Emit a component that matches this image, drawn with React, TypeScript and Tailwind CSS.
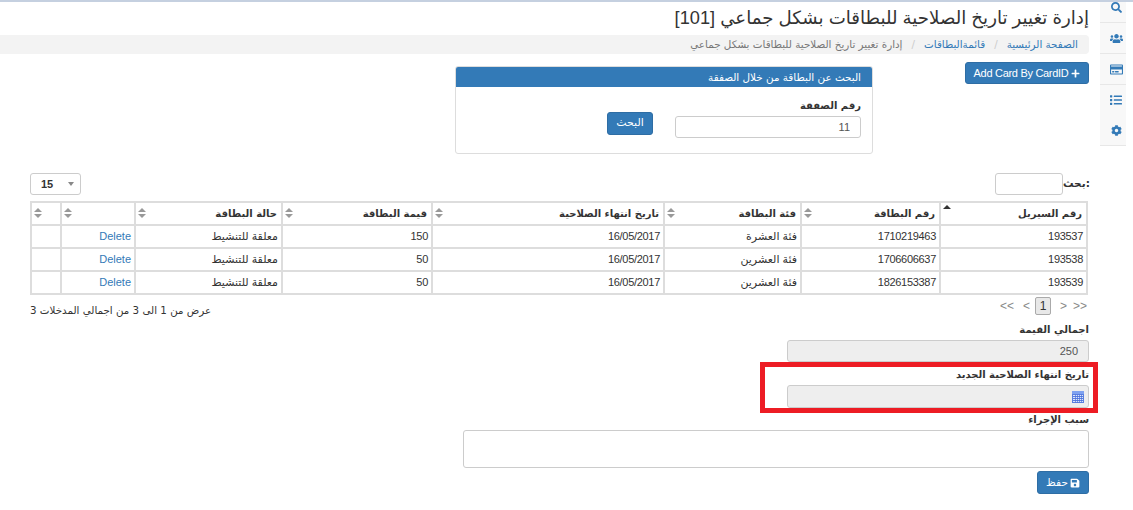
import { FaSearch, FaUsers, FaRegCreditCard, FaList, FaCog, FaPlus, FaSave } from "react-icons/fa"

const rows = [
  { serial: "193537", card: "1710219463", cat: "فئة العشرة", exp: "16/05/2017", val: "150" },
  { serial: "193538", card: "1706606637", cat: "فئة العشرين", exp: "16/05/2017", val: "50" },
  { serial: "193539", card: "1826153387", cat: "فئة العشرين", exp: "16/05/2017", val: "50" },
]

const SortIcon = ({ up }: { up?: boolean }) => (
  <svg width="8" height="10" viewBox="0 0 8 10" className="shrink-0">
    {up ? (
      <path d="M0 4 L4 0 L8 4 Z" fill="#333" />
    ) : (
      <>
        <path d="M0 4 L4 0 L8 4 Z" fill="#999" />
        <path d="M0 6 L4 10 L8 6 Z" fill="#999" />
      </>
    )}
  </svg>
)

const Th = ({ label, w, up }: { label?: string; w: string; up?: boolean }) => (
  <th className={`${w} border-2 border-b-0 border-[#ddd] h-[23px] pr-[3px] pl-[2px] align-middle font-bold text-[10px] text-[#333]`}>
    <div className="flex items-center justify-between">
      <span className="pr-px">{label}</span>
      <span className={up ? "-mt-2" : "-mt-0.5"}>
        <SortIcon up={up} />
      </span>
    </div>
  </th>
)

const Td = ({ children, blue, num }: { children?: React.ReactNode; blue?: boolean; num?: boolean }) => (
  <td
    className={`border-2 border-[#ddd] h-[23px] px-[3px] text-right text-[11px] ${blue ? "text-[#337ab7]" : "text-[#333]"} ${
      num ? "tracking-[-0.3px]" : ""
    } font-['Liberation_Sans','DejaVu_Sans',sans-serif]`}
  >
    {children}
  </td>
)

const Calendar = () => (
  <svg width="12" height="12" viewBox="0 0 12 12">
    <rect width="12" height="12" fill="#5a7fe0" />
    <rect width="12" height="3" fill="#7fa2f0" />
    {[4, 6, 8, 10].map((y) => (
      <rect key={y} x="1" y={y} width="10" height="1" fill="#dce6fb" />
    ))}
    {[3, 5, 7, 9].map((x) => (
      <rect key={x} x={x} y="3.5" width="0.7" height="8" fill="#4a6fdc" />
    ))}
  </svg>
)

export default function App() {
  return (
    <div className="w-[1133px] h-[510px] overflow-hidden bg-white text-[#333] font-['DejaVu_Sans','Noto_Sans',sans-serif]">
      <div className="h-[2px] bg-[#c5d0e0]" />
      <div className="flex">
        <main className="w-[1100px] shrink-0 pl-[30px] pr-[11px]">
          <h1 dir="rtl" className="h-[33px] pt-[1px] text-[18.2px] leading-[30px] font-normal text-[#333] font-['Liberation_Sans','DejaVu_Sans',sans-serif]">
            إدارة تغيير تاريخ الصلاحية للبطاقات بشكل جماعي [101]
          </h1>
          <div dir="rtl" className="h-[19px] -ml-[30px] flex items-center gap-[9px] px-[11px] rounded-r bg-[#f3f3f3] text-[10.35px]">
            <span className="text-[#337ab7]">الصفحة الرئيسية</span>
            <span className="text-[#ccc]">/</span>
            <span className="text-[#337ab7]">قائمةالبطاقات</span>
            <span className="text-[#ccc]">/</span>
            <span className="text-[#777]">إدارة تغيير تاريخ الصلاحية للبطاقات بشكل جماعي</span>
          </div>

          <div dir="rtl" className="flex mt-[8px] h-[92px] items-start">
            <button className="w-[124px] h-[22px] flex items-center justify-center gap-[3px] rounded-[3px] border border-[#2e6da4] bg-[#337ab7] text-white text-[11px] tracking-[-0.3px] whitespace-nowrap font-['Liberation_Sans',sans-serif]">
              <FaPlus size={9} />
              <span dir="ltr">Add Card By CardID</span>
            </button>
            <section className="w-[418px] h-[88px] mr-[92px] mt-[4px] border border-[#ddd] rounded-[3px] overflow-hidden">
              <div className="h-[20px] bg-[#337ab7] text-white text-[10.4px] leading-[20px] px-[11px]">
                البحث عن البطاقة من خلال الصفقة
              </div>
              <div className="px-[11px] pt-[11px]">
                <div className="text-[10px] font-bold leading-[15px] text-[#333]">رقم الصفقة</div>
                <div className="flex items-start">
                  <input
                    readOnly
                    value="11"
                    className="w-[186px] h-[22px] mt-[3px] px-[10px] border border-[#ccc] rounded-[3px] text-right text-[11px] text-[#555] font-['Liberation_Sans',sans-serif]"
                  />
                  <button className="w-[46px] h-[23px] mr-[22px] -mt-[1px] rounded-[3px] border border-[#2e6da4] bg-[#337ab7] text-white text-[11px]">
                    البحث
                  </button>
                </div>
              </div>
            </section>
          </div>

          <div className="flex justify-between items-center mt-[19px] h-[22px]">
            <div className="w-[51px] h-[22px] flex items-center justify-between pl-[10px] pr-[6px] border border-[#ccc] rounded-[3px] text-[11px] font-bold font-['Liberation_Sans',sans-serif]">
              <span>15</span>
              <svg width="6" height="4" viewBox="0 0 6 4">
                <path d="M0 0 L6 0 L3 4 Z" fill="#888" />
              </svg>
            </div>
            <div className="flex items-center">
              <div className="w-[68px] h-[22px] border border-[#ccc] rounded-[3px]" />
              <span className="text-[10.5px] font-bold w-[26px] text-right">بحث:</span>
            </div>
          </div>

          <table dir="rtl" className="mt-[6px] w-[1056px] table-fixed border-collapse border-b-2 border-b-[#222]">
            <thead>
              <tr className="border-b-2 border-b-[#111]">
                <Th label="رقم السيريل" w="w-[147px]" up />
                <Th label="رقم البطاقة" w="w-[139px]" />
                <Th label="فئة البطاقة" w="w-[137px]" />
                <Th label="تاريخ انتهاء الصلاحية" w="w-[232px]" />
                <Th label="قيمة البطاقة" w="w-[150px]" />
                <Th label="حالة البطاقة" w="w-[147px]" />
                <Th w="w-[74px]" />
                <Th w="w-[30px]" />
              </tr>
            </thead>
            <tbody>
              {rows.map((r) => (
                <tr key={r.serial}>
                  <Td num>{r.serial}</Td>
                  <Td num>{r.card}</Td>
                  <Td>{r.cat}</Td>
                  <Td num>{r.exp}</Td>
                  <Td num>{r.val}</Td>
                  <Td>معلقة للتنشيط</Td>
                  <Td blue>Delete</Td>
                  <Td />
                </tr>
              ))}
            </tbody>
          </table>

          <div className="flex justify-between h-[24px]">
            <div dir="rtl" className="mt-[8px] text-[10.3px] text-[#333]">عرض من 1 الى 3 من اجمالي المدخلات 3</div>
            <div className="flex items-center h-[18px] mt-[2px] text-[#888] text-[12px] font-['Liberation_Sans',sans-serif]">
              <span>&lt;&lt;</span>
              <span className="ml-[9px]">&lt;</span>
              <span className="ml-[5px] w-[16px] h-[18px] flex items-center justify-center border border-[#aaa] rounded-[2px] bg-[#e8e8e8] text-[#333]">1</span>
              <span className="ml-[9px]">&gt;</span>
              <span className="ml-[6px] mr-[2px]">&gt;&gt;</span>
            </div>
          </div>

          <div dir="rtl">
            <div className="h-[15px] mt-[3px] text-[10px] font-bold leading-[15px]">اجمالي القيمة</div>
            <div className="w-[302px] h-[22px] mt-[3px] px-[10px] flex items-center border border-[#ccc] rounded-[3px] bg-[#eee] text-[11px] text-[#555] font-['Liberation_Sans',sans-serif]">250</div>
            <div className="relative w-[302px] h-[46px]">
              <div className="absolute -right-[9px] -left-[27px] top-0 h-[51px] border-[5px] border-[#ed1c24]" />
              <div className="relative pt-[5px] text-[10px] font-bold leading-[15px]">تاريخ انتهاء الصلاحية الجديد</div>
              <div className="relative w-[302px] h-[23px] mt-[3px] px-[4px] flex items-center border border-[#ccc] rounded-[3px] bg-[#eee]">
                <Calendar />
              </div>
            </div>
            <div className="h-[17px] mt-[3px] text-[10px] font-bold leading-[17px]">سبب الإجراء</div>
            <textarea readOnly className="block w-[626px] h-[38px] mt-[2px] border border-[#ccc] rounded-[3px] resize-none" />
            <button className="w-[52px] h-[23px] mt-[3px] flex items-center justify-center gap-[2px] rounded-[3px] border border-[#2e6da4] bg-[#337ab7] text-white text-[10.5px]">
              <FaSave size={10} />
              <span>حفظ</span>
            </button>
          </div>
        </main>

        <aside className="w-[26px] h-[144px] bg-[#f8f8f8] text-[#337ab7] flex flex-col">
          <div className="h-[21px] w-full shrink-0 border-b border-[#e7e7e7] flex items-start justify-center pl-[6px]"><FaSearch size={11} /></div>
          <div className="h-[31px] w-full shrink-0 border-b border-[#e7e7e7] flex items-center justify-center pl-[6px]"><FaUsers size={13} /></div>
          <div className="h-[31px] w-full shrink-0 border-b border-[#e7e7e7] flex items-center justify-center pl-[6px]"><FaRegCreditCard size={13} /></div>
          <div className="h-[30px] w-full shrink-0 flex items-center justify-center pl-[6px]"><FaList size={12} /></div>
          <div className="h-[31px] w-full shrink-0 border-b border-[#e7e7e7] flex items-center justify-center pl-[6px]"><FaCog size={11} /></div>
        </aside>
      </div>
    </div>
  )
}
